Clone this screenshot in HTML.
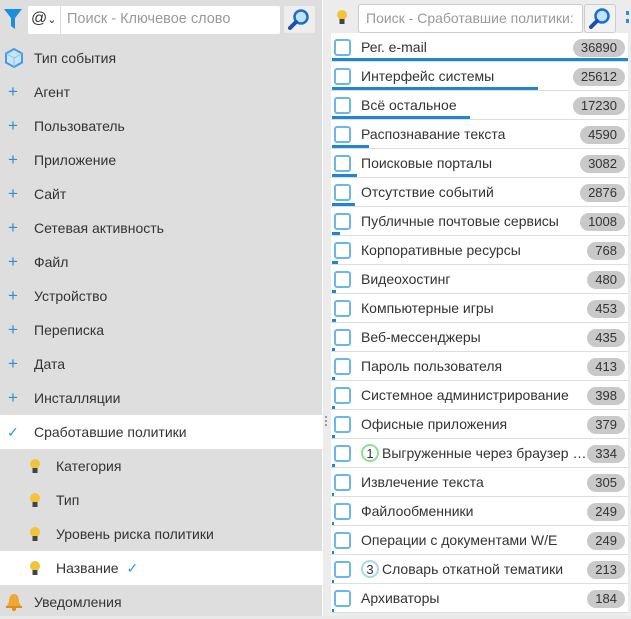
<!DOCTYPE html><html><head><meta charset="utf-8"><style>
*{box-sizing:border-box;margin:0;padding:0}
body{width:631px;height:616px;overflow:hidden;font-family:"Liberation Sans",sans-serif;font-size:14px;color:#333;background:#e9e9e9;position:relative}
#left{position:absolute;left:0;top:0;width:322px;height:616px;background:#dedede}
#split{position:absolute;left:322px;top:0;width:9px;height:616px;background:#ececec;border-left:1px solid #fff}
#right{position:absolute;left:331px;top:0;width:300px;height:616px;background:#ececec}
.lrow{position:absolute;left:0;width:322px;height:34px;line-height:34px}
.lrow.w{background:#fff}
.lrow span.t{position:absolute;left:34px}
.lrow.sub span.t{position:absolute;left:56px}
.plus{position:absolute;left:8px;color:#2a8fd6;font-size:17px;font-weight:300}
.bulb{position:absolute;top:8px;width:16px;height:18px}
.rrow{position:absolute;left:0;width:297px;height:29px;background:#fff;border-bottom:1px solid #ddd}
.cb{position:absolute;left:3px;top:6px;width:17px;height:17px;border:2px solid #6bb6ec;border-radius:3px;background:#fff}
.rt{position:absolute;left:30px;top:0;line-height:29px;white-space:nowrap}
.bd{position:absolute;right:3px;top:6px;height:18px;line-height:18px;background:#c9c9c9;border-radius:9px;font-size:13px;padding:0 8px;color:#333}
.bar{position:absolute;left:1px;bottom:0;height:3px;background:#1f87cf}
.num{display:inline-block;width:18px;height:18px;border-radius:50%;text-align:center;line-height:15px;font-size:13px;margin-right:3px;vertical-align:middle;position:relative;top:-1px}
</style></head><body>
<div id="left">
 <svg style="position:absolute;left:4px;top:9px" width="18" height="20" viewBox="0 0 18 20"><path d="M0 0H18L11 9V20L7 17V9Z" fill="#1a8fe0"/></svg>
 <div style="position:absolute;left:27px;top:5px;width:254px;height:30px;background:#fff;border:1px solid #ddd;border-radius:3px"></div>
 <div style="position:absolute;left:31px;top:10px;font-size:16px;color:#333">@<span style="font-size:11px">&#8964;</span></div>
 <div style="position:absolute;left:60px;top:6px;width:1px;height:28px;background:#ddd"></div>
 <div style="position:absolute;left:67px;top:11px;color:#999;font-size:14.5px">Поиск - Ключевое слово</div>
 <div style="position:absolute;left:283px;top:5px;width:33px;height:29px;background:#eee;border:1px solid #ddd;border-radius:3px"></div>
 <svg style="position:absolute;left:288px;top:8px" width="22" height="22" viewBox="0 0 22 22"><circle cx="13" cy="9" r="6.5" fill="#bfe3f7" stroke="#1a6fc8" stroke-width="2.5"/><path d="M8 14L2 20" stroke="#1a4fb0" stroke-width="4" stroke-linecap="round"/></svg>
 <svg style="position:absolute;left:4px;top:48px" width="20" height="20" viewBox="0 0 20 20"><path d="M10 1L18 5.5V14.5L10 19L2 14.5V5.5Z" fill="#c8e4f8" stroke="#4a9ae0" stroke-width="2"/><path d="M2 5.5L10 10L18 5.5M10 10V19" stroke="#8cc4ee" stroke-width="1" fill="none"/></svg>
 <div class="lrow" style="top:41px"><span class="t">Тип события</span></div>
 <div class="lrow" style="top:75px"><span class="plus">+</span><span class="t">Агент</span></div>
 <div class="lrow" style="top:109px"><span class="plus">+</span><span class="t">Пользователь</span></div>
 <div class="lrow" style="top:143px"><span class="plus">+</span><span class="t">Приложение</span></div>
 <div class="lrow" style="top:177px"><span class="plus">+</span><span class="t">Сайт</span></div>
 <div class="lrow" style="top:211px"><span class="plus">+</span><span class="t">Сетевая активность</span></div>
 <div class="lrow" style="top:245px"><span class="plus">+</span><span class="t">Файл</span></div>
 <div class="lrow" style="top:279px"><span class="plus">+</span><span class="t">Устройство</span></div>
 <div class="lrow" style="top:313px"><span class="plus">+</span><span class="t">Переписка</span></div>
 <div class="lrow" style="top:347px"><span class="plus">+</span><span class="t">Дата</span></div>
 <div class="lrow" style="top:381px"><span class="plus">+</span><span class="t">Инсталляции</span></div>
 <div class="lrow w" style="top:415px"><span style="position:absolute;left:7px;color:#2a9be0;font-size:14px">&#10003;</span><span class="t">Сработавшие политики</span></div>
 <div class="lrow sub" style="top:449px"><svg class="bulb" style="left:27px" viewBox="0 0 16 18"><circle cx="8" cy="7" r="5" fill="#f2c43c"/><rect x="5.5" y="11" width="5" height="5" fill="#444"/></svg><span class="t">Категория</span></div>
 <div class="lrow sub" style="top:483px"><svg class="bulb" style="left:27px" viewBox="0 0 16 18"><circle cx="8" cy="7" r="5" fill="#f2c43c"/><rect x="5.5" y="11" width="5" height="5" fill="#444"/></svg><span class="t">Тип</span></div>
 <div class="lrow sub" style="top:517px"><svg class="bulb" style="left:27px" viewBox="0 0 16 18"><circle cx="8" cy="7" r="5" fill="#f2c43c"/><rect x="5.5" y="11" width="5" height="5" fill="#444"/></svg><span class="t">Уровень риска политики</span></div>
 <div class="lrow sub w" style="top:551px"><svg class="bulb" style="left:27px" viewBox="0 0 16 18"><circle cx="8" cy="7" r="5" fill="#f2c43c"/><rect x="5.5" y="11" width="5" height="5" fill="#444"/></svg><span class="t">Название <span style="color:#2a9be0;margin-left:4px">&#10003;</span></span></div>
 <div class="lrow" style="top:585px"><svg style="position:absolute;left:5px;top:8px" width="18" height="18" viewBox="0 0 18 18"><path d="M9 1C5 1 4 5 4 9L2 13H16L14 9C14 5 13 1 9 1Z" fill="#f0a830"/><rect x="1" y="13" width="16" height="2" fill="#e08a20"/><circle cx="9" cy="16" r="2" fill="#e08a20"/></svg><span class="t">Уведомления</span></div>
</div>
<div id="split"><div style="position:absolute;left:2px;top:416px;width:2px;height:10px;border-left:2px dotted #999"></div></div>
<div id="right">
 <svg style="position:absolute;left:3px;top:8px" width="16" height="18" viewBox="0 0 16 18"><circle cx="8" cy="7" r="5" fill="#f2c43c"/><rect x="5.5" y="11" width="5" height="5" fill="#444"/></svg>
 <div style="position:absolute;left:27px;top:4px;width:225px;height:29px;background:#fff;border:1px solid #ccc;border-radius:3px"></div>
 <div style="position:absolute;left:35px;top:10px;color:#999;font-size:14px">Поиск - Сработавшие политики:</div>
 <div style="position:absolute;left:253px;top:4px;width:32px;height:29px;background:#f2f2f2;border:1px solid #ccc;border-radius:3px"></div>
 <svg style="position:absolute;left:258px;top:7px" width="22" height="22" viewBox="0 0 22 22"><circle cx="13" cy="9" r="6.5" fill="#bfe3f7" stroke="#1a6fc8" stroke-width="2.5"/><path d="M8 14L2 20" stroke="#1a4fb0" stroke-width="4" stroke-linecap="round"/></svg>
 <div style="position:absolute;left:295px;top:11px;width:4px;height:12px;border-left:3px dotted #2a8fd6"></div>
 <div style="position:absolute;left:0;top:33px">
  <div class="rrow" style="top:0"><div class="cb"></div><div class="rt">Рег. e-mail</div><div class="bd">36890</div><div class="bar" style="width:296px"></div></div>
  <div class="rrow" style="top:29px"><div class="cb"></div><div class="rt">Интерфейс системы</div><div class="bd">25612</div><div class="bar" style="width:206px"></div></div>
  <div class="rrow" style="top:58px"><div class="cb"></div><div class="rt">Всё остальное</div><div class="bd">17230</div><div class="bar" style="width:138px"></div></div>
  <div class="rrow" style="top:87px"><div class="cb"></div><div class="rt">Распознавание текста</div><div class="bd">4590</div><div class="bar" style="width:37px"></div></div>
  <div class="rrow" style="top:116px"><div class="cb"></div><div class="rt">Поисковые порталы</div><div class="bd">3082</div><div class="bar" style="width:25px"></div></div>
  <div class="rrow" style="top:145px"><div class="cb"></div><div class="rt">Отсутствие событий</div><div class="bd">2876</div><div class="bar" style="width:23px"></div></div>
  <div class="rrow" style="top:174px"><div class="cb"></div><div class="rt">Публичные почтовые сервисы</div><div class="bd">1008</div><div class="bar" style="width:8px"></div></div>
  <div class="rrow" style="top:203px"><div class="cb"></div><div class="rt">Корпоративные ресурсы</div><div class="bd">768</div><div class="bar" style="width:6px"></div></div>
  <div class="rrow" style="top:232px"><div class="cb"></div><div class="rt">Видеохостинг</div><div class="bd">480</div><div class="bar" style="width:4px"></div></div>
  <div class="rrow" style="top:261px"><div class="cb"></div><div class="rt">Компьютерные игры</div><div class="bd">453</div><div class="bar" style="width:4px"></div></div>
  <div class="rrow" style="top:290px"><div class="cb"></div><div class="rt">Веб-мессенджеры</div><div class="bd">435</div><div class="bar" style="width:3px"></div></div>
  <div class="rrow" style="top:319px"><div class="cb"></div><div class="rt">Пароль пользователя</div><div class="bd">413</div><div class="bar" style="width:3px"></div></div>
  <div class="rrow" style="top:348px"><div class="cb"></div><div class="rt">Системное администрирование</div><div class="bd">398</div><div class="bar" style="width:3px"></div></div>
  <div class="rrow" style="top:377px"><div class="cb"></div><div class="rt">Офисные приложения</div><div class="bd">379</div><div class="bar" style="width:3px"></div></div>
  <div class="rrow" style="top:406px"><div class="cb"></div><div class="rt"><span class="num" style="border:2px solid #8fe08f">1</span>Выгруженные через браузер …</div><div class="bd">334</div><div class="bar" style="width:3px"></div></div>
  <div class="rrow" style="top:435px"><div class="cb"></div><div class="rt">Извлечение текста</div><div class="bd">305</div><div class="bar" style="width:2px"></div></div>
  <div class="rrow" style="top:464px"><div class="cb"></div><div class="rt">Файлообменники</div><div class="bd">249</div><div class="bar" style="width:2px"></div></div>
  <div class="rrow" style="top:493px"><div class="cb"></div><div class="rt">Операции с документами W/E</div><div class="bd">249</div><div class="bar" style="width:2px"></div></div>
  <div class="rrow" style="top:522px"><div class="cb"></div><div class="rt"><span class="num" style="border:2px solid #a8d8ec">3</span>Словарь откатной тематики</div><div class="bd">213</div><div class="bar" style="width:2px"></div></div>
  <div class="rrow" style="top:551px"><div class="cb"></div><div class="rt">Архиваторы</div><div class="bd">184</div><div class="bar" style="width:2px"></div></div>
 </div>
</div>
</body></html>
